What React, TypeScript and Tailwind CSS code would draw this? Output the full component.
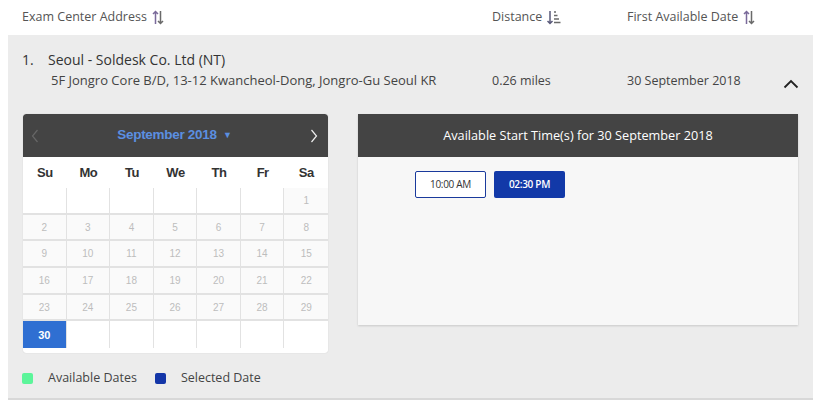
import React from "react";

const SortBoth = () => (
  <svg width="12" height="15" viewBox="0 0 12 15" className="inline-block ml-[5px]">
    <path d="M3.5 14V1.5M1 4L3.5 1.5L6 4" stroke="#7a6a9a" strokeWidth="1.5" fill="none" />
    <path d="M8.5 1V13.5M6 11L8.5 13.5L11 11" stroke="#6a6a6a" strokeWidth="1.5" fill="none" />
  </svg>
);

const SortAmount = () => (
  <svg width="14" height="15" viewBox="0 0 14 15" className="inline-block ml-[5px]">
    <path d="M3 1V13.5M0.5 11L3 13.5L5.5 11" stroke="#5a5a7a" strokeWidth="1.5" fill="none" />
    <path d="M7 2H9M7 5.5H10.5M7 9H12M7 12.5H13.5" stroke="#6a6a6a" strokeWidth="1.3" fill="none" />
  </svg>
);

const days = ["Su", "Mo", "Tu", "We", "Th", "Fr", "Sa"];

export default function App() {
  const cells: (number | null)[] = [];
  for (let i = 0; i < 6; i++) cells.push(null);
  for (let d = 1; d <= 30; d++) cells.push(d);
  while (cells.length < 42) cells.push(null);

  return (
    <div className="w-[820px] h-[409px] bg-white overflow-hidden text-[#444]" style={{ fontFamily: "'Open Sans', sans-serif" }}>
      {/* header */}
      <div className="flex items-center h-[35px] pl-[22px] text-[12.5px] text-[#555]">
        <div className="w-[470px] flex items-center">Exam Center Address<SortBoth /></div>
        <div className="w-[135px] flex items-center">Distance<SortAmount /></div>
        <div className="flex items-center">First Available Date<SortBoth /></div>
      </div>

      {/* panel */}
      <div className="mx-[8px] w-[805px] h-[365px] bg-[#ececec] border-b-2 border-[#d8d8d8] pt-[14px] pl-[14px]">
        <div className="flex items-center h-[20px] text-[14px] text-[#333]">
          <span className="w-[26px]">1.</span>
          <span>Seoul - Soldesk Co. Ltd (NT)</span>
        </div>
        <div className="flex items-center h-[24px] text-[12.5px] text-[#444]">
          <div className="w-[470px] pl-[29px] text-[13px]">5F Jongro Core B/D, 13-12 Kwancheol-Dong, Jongro-Gu Seoul KR</div>
          <div className="w-[135px]">0.26 miles</div>
          <div className="w-[156px]">30 September 2018</div>
          <svg width="16" height="10" viewBox="0 0 16 10" className="mt-[6px]">
            <path d="M1.5 8.5L8 2L14.5 8.5" stroke="#222" strokeWidth="1.8" fill="none" />
          </svg>
        </div>

        <div className="flex mt-[21px] pl-[1px]">
          {/* calendar */}
          <div className="w-[305px]">
            <div className="bg-white rounded-[3px] overflow-hidden shadow-[0_0_1px_rgba(0,0,0,0.2)]" style={{ fontFamily: "'Liberation Sans', Arial, sans-serif" }}>
              <div className="h-[43px] bg-[#444] flex items-center justify-between px-[8px] rounded-t-[3px]">
                <svg width="8" height="14" viewBox="0 0 8 14"><path d="M6.5 1L1.5 7L6.5 13" stroke="#666" strokeWidth="1.2" fill="none" /></svg>
                <div className="text-[13.5px] font-bold text-[#5b8fe0] tracking-[-0.3px]">
                  September 2018 <span className="text-[9px] ml-[3px] align-middle">▼</span>
                </div>
                <svg width="8" height="14" viewBox="0 0 8 14" className="mr-[2px]"><path d="M1.5 1L6.5 7L1.5 13" stroke="#eee" strokeWidth="1.2" fill="none" /></svg>
              </div>
              <div className="grid grid-cols-7 h-[31px] items-center text-center text-[13px] font-bold text-[#333] tracking-[-0.5px]">
                {days.map((d) => (
                  <div key={d}>{d}</div>
                ))}
              </div>
              <div className="grid grid-cols-7 pb-[5px]">
                {cells.map((c, i) => {
                  const col = i % 7;
                  const row = Math.floor(i / 7);
                  const last = col === 6;
                  const isSel = c === 30;
                  const base = `h-[26.7px] flex items-center justify-center text-[10px] ${last ? "" : "border-r"} ${row < 5 ? "border-b-2" : ""} border-[#e2e2e2]`;
                  if (isSel)
                    return (
                      <div key={i} className={`${base} bg-[#2f6fd2] text-white font-bold text-[11px]`}>
                        30
                      </div>
                    );
                  if (c === null)
                    return <div key={i} className={`${base} bg-white`} />;
                  return (
                    <div key={i} className={`${base} bg-[#fafafa] text-[#bdbdbd]`}>
                      {c}
                    </div>
                  );
                })}
              </div>
            </div>
            <div className="flex items-center mt-[16px] -ml-[1px] text-[12.5px] text-[#444]">
              <span className="w-[11px] h-[11px] bg-[#5cf59a] rounded-[2px]" />
              <span className="ml-[15px]">Available Dates</span>
              <span className="w-[11px] h-[11px] bg-[#1436a8] rounded-[2px] ml-[18px]" />
              <span className="ml-[15px]">Selected Date</span>
            </div>
          </div>

          {/* times */}
          <div className="ml-[30px] w-[440px] h-[211px] bg-[#f7f7f7] shadow-[0_1px_2px_rgba(0,0,0,0.15)]">
            <div className="h-[43px] bg-[#444] flex items-center justify-center text-white text-[12.7px]">
              Available Start Time(s) for 30 September 2018
            </div>
            <div className="flex gap-[8px] pt-[14px] pl-[57px]" style={{ fontFamily: "'Open Sans', sans-serif" }}>
              <div className="w-[71px] h-[27px] border border-[#1a3a9c] bg-white rounded-[2px] flex items-center justify-center text-[10px] text-[#333] tracking-[-0.3px]">
                10:00 AM
              </div>
              <div className="w-[71px] h-[27px] bg-[#1239a8] rounded-[2px] flex items-center justify-center text-[10px] text-white font-semibold tracking-[-0.3px]">
                02:30 PM
              </div>
            </div>
          </div>
        </div>
      </div>
    </div>
  );
}
